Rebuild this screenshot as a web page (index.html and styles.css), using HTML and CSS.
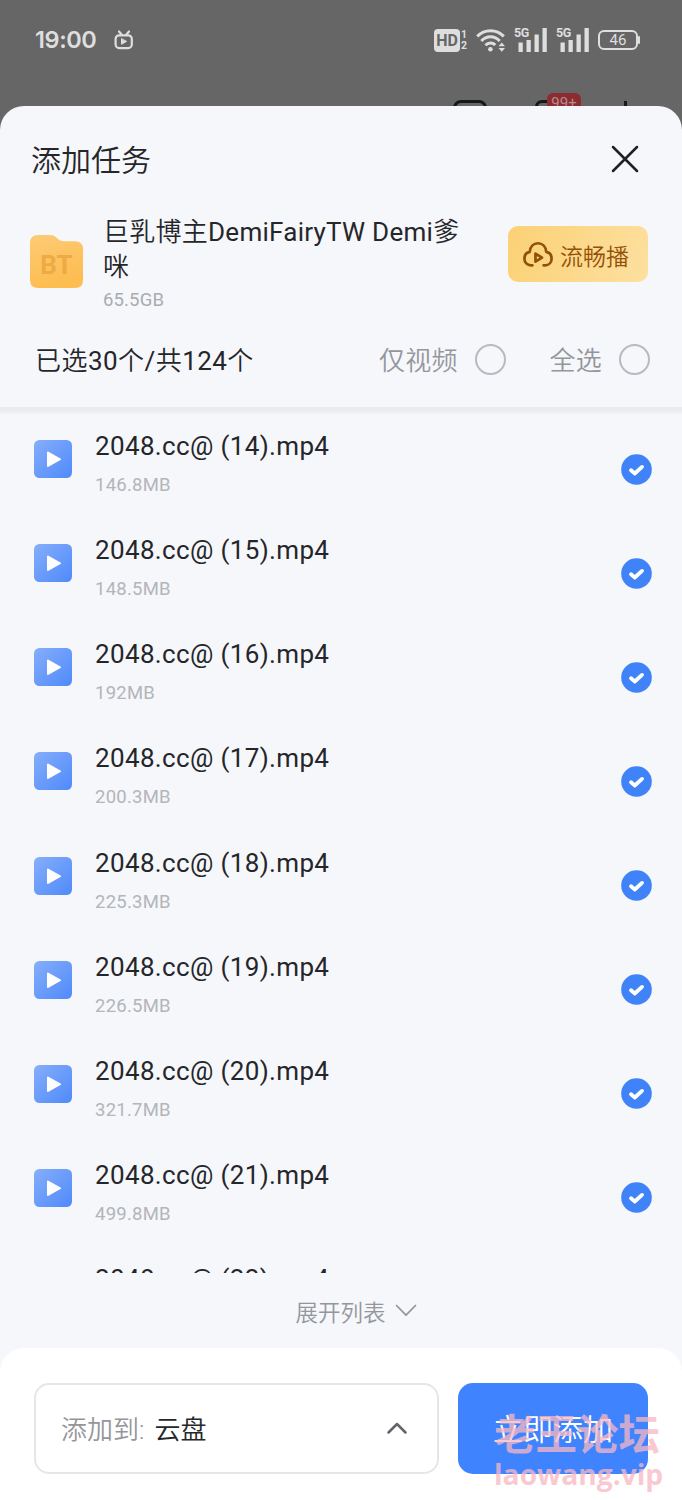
FILE: index.html
```html
<!DOCTYPE html>
<html lang="zh-CN">
<head>
<meta charset="utf-8">
<title>添加任务</title>
<link rel="stylesheet" href="styles.css">
</head>
<body>
<div class="phone">
  <header class="status">
    <span class="clock">19:00</span>
    <svg class="tv" width="20" height="20" viewBox="0 0 20 20" fill="none" stroke="#dedede" stroke-width="2.2" stroke-linecap="round" stroke-linejoin="round"><path d="M5 1.5 8 5M15 1.5 12 5"/><rect x="1.6" y="5.3" width="16.2" height="12.8" rx="3.6"/><path d="M7.5 9v5.2l4.8-2.6z" fill="#dedede" stroke-width="1"/></svg>
    <span class="hd">HD</span>
    <span class="sims"><i>1</i><i>2</i></span>
    <svg class="wifi" width="30" height="25" viewBox="0 0 30 25" fill="none" stroke="#dedede" stroke-width="3"><path d="M1.2 8.4C8.5.7 20.5.7 27.8 8.4"/><path d="M5.3 13C10.5 7.4 18.5 7.4 23.7 13"/><path d="M9.4 17.3C12.4 14.3 16.6 14.3 19.3 17"/><circle cx="14.4" cy="21.3" r="2.3" fill="#dedede" stroke="none"/><path d="M22.5 18.3 25.8 14.5 29 18.3zM22.5 20 25.8 23.8 29 20z" fill="#dedede" stroke="none"/></svg>
    <span class="signal"><b>5G</b><svg width="33" height="24" viewBox="0 0 33 24" fill="#dedede"><path d="M4.5 14.5h4.3V24H4.5zM12.5 12h4.3v12h-4.3zM20.5 6.5h4.3V24h-4.3zM28.5 0h4.3v24h-4.3z"/></svg></span>
    <span class="signal second"><b>5G</b><svg width="33" height="24" viewBox="0 0 33 24" fill="#dedede"><path d="M4.5 14.5h4.3V24H4.5zM12.5 12h4.3v12h-4.3zM20.5 6.5h4.3V24h-4.3zM28.5 0h4.3v24h-4.3z"/></svg></span>
    <span class="battery">46</span><span class="battery-tip"></span>
  </header>
  <div class="toolbar">
    <span class="tool-a"></span><span class="tool-b"></span><span class="count">99+</span><span class="plus"></span>
  </div>
  <main class="sheet">
    <div class="title-row">
      <h1>添加任务</h1>
      <svg width="28" height="28" viewBox="0 0 28 28" fill="none" stroke="#202124" stroke-width="2.5" stroke-linecap="round"><path d="M2 2 26 26M26 2 2 26"/></svg>
    </div>
    <section class="torrent">
      <svg class="folder" width="54" height="54" viewBox="0 0 54 54"><defs><linearGradient id="fold" x1="0" y1="0" x2="0.3" y2="1"><stop offset="0" stop-color="#fdcb76"/><stop offset="1" stop-color="#fdbd50"/></linearGradient></defs><path d="M8 0H20C24 0 26 2 28 4Q30.5 6.3 34 6.3H45Q53 6.3 53 14V45Q53 53 45 53H8Q0 53 0 45V8Q0 0 8 0Z" fill="url(#fold)"/><text x="26.5" y="38.5" text-anchor="middle" class="bt">BT</text></svg>
      <div class="torrent-info">
        <h2>巨乳博主<span class="latin">DemiFairyTW Demi</span>爹咪</h2>
        <p>65.5GB</p>
      </div>
      <button class="play"><svg width="30" height="27" viewBox="0 0 32 28" fill="none" stroke="#935107" stroke-width="2.9" stroke-linecap="round" stroke-linejoin="round"><path d="M10 25.5H8.5C4.5 25.5 1.5 22.5 1.5 18.5 1.5 14.5 4 11.8 7.2 11.2 7.8 5.5 11.5 2 16 2S24.2 5.5 24.8 11.2C28 11.8 30.5 14.5 30.5 18.5 30.5 22.5 27.5 25.5 23.5 25.5H22"/><path d="M13.3 13v8.6l7-4.3z"/></svg>流畅播</button>
    </section>
    <section class="filters">
      <strong>已选<span class="latin">30</span>个<span class="latin">/</span>共<span class="latin">124</span>个</strong>
      <label class="video-only">仅视频<i class="radio"></i></label>
      <label class="all">全选<i class="radio"></i></label>
    </section>
    <ul class="files" id="files"></ul>
    <div class="expand">展开列表<svg width="22" height="13" viewBox="0 0 22 13" fill="none" stroke="#94969b" stroke-width="1.7" stroke-linecap="round" stroke-linejoin="round"><path d="M1.5 1.5 11 11.2 20.5 1.5"/></svg></div>
    <footer class="actions">
      <div class="destination"><span>添加到:</span><em>云盘</em><svg width="22" height="14" viewBox="0 0 22 14" fill="none" stroke="#626469" stroke-width="2.5" stroke-linecap="round" stroke-linejoin="round"><path d="M2.5 11.5 11 3 19.5 11.5"/></svg></div>
      <button class="submit">立即添加</button>
      <div class="watermark"><span class="wm-name">老王论坛</span><span class="wm-site">laowang.vip</span></div>
    </footer>
  </main>
</div>
<script src="files.js"></script>
</body>
</html>
```
FILE: styles.css
```css
* { box-sizing: border-box; }
body { margin: 0; background: #666; font-family: Roboto, "Noto Sans CJK SC", sans-serif; font-weight: 350; color: #25262a; }
h1, h2, p, ul { margin: 0; padding: 0; font-weight: inherit; }
i, em { font-style: normal; }
button { border: 0; padding: 0; font-family: inherit; font-weight: inherit; }
svg { display: block; flex: none; }
.latin { font-weight: 400; }
.phone { width: 682px; height: 1500px; overflow: hidden; display: flex; flex-direction: column; }

.status { height: 80px; flex: none; display: flex; align-items: center; padding-left: 35px; color: #dedede; }
.clock { width: 62px; font: 600 23.5px/28px Inter, sans-serif; white-space: nowrap; letter-spacing: -.4px; }
.tv { margin-left: 17px; }
.hd { width: 26px; height: 23px; margin-left: 300px; border-radius: 4px; background: #dedede; color: #666; font: 700 16px/23px Roboto, sans-serif; text-align: center; }
.sims { width: 8px; margin-left: 1px; display: grid; font: 700 10.5px/11px Roboto, sans-serif; }
.wifi { margin-left: 7px; }
.signal { position: relative; width: 33px; height: 24px; margin-left: 8px; }
.signal b { position: absolute; left: 0; top: -1px; font: 700 12.5px/12px Roboto, sans-serif; letter-spacing: -.5px; }
.signal.second { margin-left: 9px; }
.battery { width: 40px; height: 20px; margin-left: 9px; border: 2px solid #dedede; border-radius: 6px; font: 400 15px/17px Roboto, sans-serif; text-align: center; }
.battery-tip { width: 2px; height: 8px; margin-left: 0; background: #dedede; border-radius: 1px; }

.toolbar { height: 26px; flex: none; display: flex; align-items: flex-start; padding-left: 453px; overflow: hidden; }
.tool-a { width: 34px; height: 20px; margin-top: 20px; border: 3px solid #171819; border-radius: 8px; }
.tool-b { width: 20px; height: 20px; margin: 20px 0 0 48px; border: 3px solid #171819; border-right: 0; border-radius: 7px 0 0 0; }
.count { width: 34px; height: 20px; margin: 13px 0 0 -8px; border-radius: 6px; background: #8b2c31; color: #b78a8c; font: 400 15px/20px Roboto, sans-serif; text-align: center; }
.plus { width: 3px; height: 10px; margin: 21px 0 0 43px; background: #171819; }

.sheet { flex: 1; min-height: 0; display: flex; flex-direction: column; background: #f6f7fb; border-radius: 24px 24px 0 0; overflow: hidden; }
.title-row { height: 106px; display: flex; flex: none; align-items: center; justify-content: space-between; padding: 0 43px 0 31px; }
h1 { font-size: 30px; line-height: 44px; margin-top: 4px; }
.torrent { height: 101px; flex: none; display: flex; align-items: flex-start; padding-left: 30px; }
.folder { margin-top: 23px; }
.bt { font: 700 26px Roboto, sans-serif; fill: #eeaa43; }
.torrent-info { width: 380px; margin: 3px 0 0 19px; }
h2 { width: 372px; font-size: 26px; line-height: 35px; letter-spacing: .26px; }
.torrent-info p { font-size: 18.5px; font-weight: 400; line-height: 28px; margin-top: 1px; color: #a9abb0; letter-spacing: .15px; }
.play { width: 140px; height: 56px; margin: 14px 0 0 25px; display: flex; align-items: center; padding: 1px 0 0 15px; gap: 7px; font-size: 23px; color: #935107; background: linear-gradient(110deg, #fbd175, #fde0a0); border-radius: 10px; }
.filters { height: 94px; flex: none; display: flex; align-items: center; padding: 0 0 4px 35px; font-size: 26px; }
.filters strong { width: 344px; font-weight: inherit; letter-spacing: .45px; }
.filters label { display: flex; align-items: center; color: #94969c; letter-spacing: .2px; }
.radio { width: 31px; height: 31px; border: 2px solid #b8bac0; border-radius: 50%; margin-left: 17px; margin-top: 2px; }
.all { margin-left: 44px; }
.files { height: 866px; flex: none; overflow: hidden; list-style: none; background: linear-gradient(#eaebef, #ecedf1 4px, #f5f7fb 8px); padding-top: 9px; }
.file { height: 104.14px; display: flex; align-items: flex-start; padding-left: 34px; font-weight: 400; }
.file-icon { margin-top: 24px; }
.file-text { width: 526px; margin: 10px 0 0 23px; }
.name { font-size: 26px; line-height: 40px; letter-spacing: .35px; }
.size { font-size: 18.5px; line-height: 28px; margin-top: 5px; letter-spacing: .25px; color: #b3b5b9; }
.check { margin-top: 37.5px; }
.expand { height: 75px; flex: none; display: flex; align-items: center; justify-content: center; gap: 9px; padding: 1px 0 0 30px; background: #f5f7fb; font-size: 22.5px; color: #94969b; }
.expand svg { margin-top: -2px; }
.actions { position: relative; flex: 1; display: flex; align-items: flex-start; padding: 35px 34px 0; gap: 19px; background: #fff; border-radius: 24px 24px 0 0; }
.destination { width: 405px; height: 91px; display: flex; align-items: center; border: 2px solid #e5e6e8; border-radius: 15px; padding: 0 0 2px 25px; font-size: 26px; color: #94969a; }
.destination em { color: #25262a; margin-left: 10px; }
.destination svg { margin-left: auto; margin-right: 29px; }
.submit { width: 190px; height: 91px; padding-bottom: 4px; border-radius: 15px; background: #4083ff; color: #fff; font-size: 30px; }
.watermark { position: absolute; left: 494px; top: 59px; width: 174px; color: rgba(248, 184, 194, .75); font-weight: 700; white-space: nowrap; }
.wm-name { display: block; font-size: 41.5px; line-height: 58px; }
.wm-site { display: block; font: 700 28.2px/32px "Open Sans", sans-serif; margin-top: -7px; }
```
FILE: files.js
```js
const files = [
  [14, '146.8MB'], [15, '148.5MB'], [16, '192MB'], [17, '200.3MB'],
  [18, '225.3MB'], [19, '226.5MB'], [20, '321.7MB'], [21, '499.8MB'], [22, '']
];
document.getElementById('files').innerHTML = files.map(([n, size]) => `
  <li class="file">
    <svg class="file-icon" width="38" height="38" viewBox="0 0 38 38"><defs><linearGradient id="g${n}" x1="0" y1="0" x2="1" y2="1"><stop offset="0" stop-color="#86aefb"/><stop offset="1" stop-color="#4f8afa"/></linearGradient></defs><rect width="38" height="38" rx="5.5" fill="url(#g${n})"/><path d="M14 12.5v13.5l12-6.75z" fill="#fff" stroke="#fff" stroke-width="2" stroke-linejoin="round"/></svg>
    <div class="file-text"><div class="name">2048.cc@ (${n}).mp4</div><div class="size">${size}</div></div>
    <svg class="check" width="31" height="31" viewBox="0 0 31 31"><circle cx="15.5" cy="15.5" r="15.3" fill="#4083f8"/><path d="M10 16.2 13.8 19.5 21 12.9" fill="none" stroke="#fff" stroke-width="3.8" stroke-linecap="round" stroke-linejoin="round"/></svg>
  </li>`).join('');
```
